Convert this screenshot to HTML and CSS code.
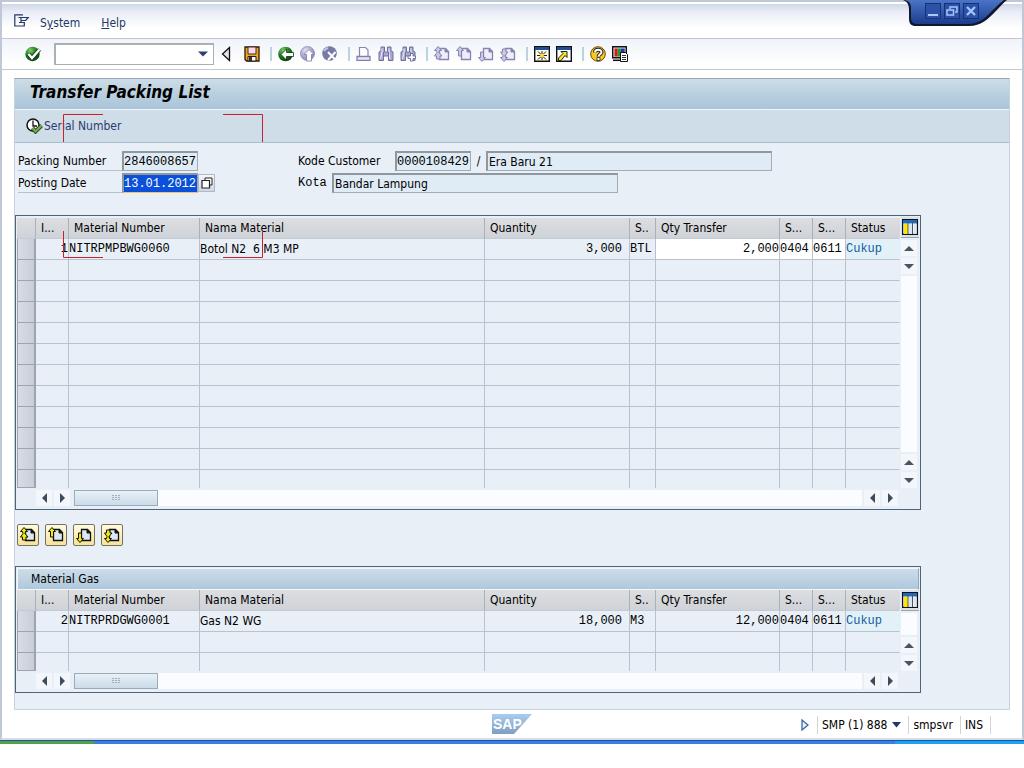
FILE: index.html
```html
<!DOCTYPE html>
<html lang="en">
<head>
<meta charset="utf-8">
<title>Transfer Packing List</title>
<link rel="stylesheet" href="styles.css">
</head>
<body>
<svg class="defs" aria-hidden="true">
  <defs>
    <radialGradient id="g-green" cx="35%" cy="25%" r="80%"><stop offset="0" stop-color="#7ccf6a"/><stop offset=".5" stop-color="#1f7a1f"/><stop offset="1" stop-color="#063c10"/></radialGradient>
    <radialGradient id="g-lilac" cx="35%" cy="25%" r="80%"><stop offset="0" stop-color="#dcdcf2"/><stop offset="1" stop-color="#8484b8"/></radialGradient>
    <linearGradient id="g-tab" x1="0" y1="0" x2="0" y2="1"><stop offset="0" stop-color="#4a74c8"/><stop offset="1" stop-color="#1c3c8c"/></linearGradient>
    <linearGradient id="g-sap" x1="0" y1="0" x2="0" y2="1"><stop offset="0" stop-color="#a8cdf0"/><stop offset="1" stop-color="#7f9fc0"/></linearGradient>
  </defs>
  <symbol id="page" viewBox="0 0 16 16"><path d="M5.500 2.500h6l3 3v8h-9z" stroke-width="1.300"/><path d="M11 2v4h3.500z" fill="currentColor" stroke-width="1"/></symbol>
  <symbol id="first" viewBox="0 0 16 16"><use href="#page"/><path class="arrow" d="M4 .5 7.500 4.500H5.500L5 6.500 8 10H6v3H2.500v-3H.5L3 6.500 2.500 4.500H.5z"/></symbol>
  <symbol id="prev" viewBox="0 0 16 16"><use href="#page"/><path class="arrow" d="M4 .5 7.500 4.500h-2V10h-3V4.500h-2z"/></symbol>
  <symbol id="next" viewBox="0 0 16 16"><use href="#page"/><path class="arrow" d="M4 15.500 7.500 11.500h-2V6h-3v5.500h-2z"/></symbol>
  <symbol id="last" viewBox="0 0 16 16"><use href="#page"/><path class="arrow" d="M4 15.500 7.500 11.500H5.500L5 9.500 8 6H6V3H2.500v3H.5L3 9.500l-.5 2H.5z"/></symbol>
  <symbol id="bino" viewBox="0 0 16 16"><path d="M3 1h3.500v5h3V1H13v4l2 1v8.500h-4.500V10h-5v4.500H1V6l2-1z" fill="#a9a9d0" stroke="#6f6f9c"/><path d="M4 2.500v4L2.500 13M11 2.500v4l.8 6.500" stroke="#ededff" fill="none"/><path d="M5.500 6v7M10.500 6v5" stroke="#73739f" fill="none"/></symbol>
  <symbol id="config" viewBox="0 0 16 16"><path d="M.5.500h15v15H.5z" fill="#fff" stroke="#111" stroke-width="1.500"/><path d="M1 1h14v3.500H1z" fill="#1e6cc0"/><path d="M2 5h4v10H2z" fill="#ffe600"/><path d="M6 2v13M10.500 2v13" stroke="#456" stroke-width="1"/><path d="M7 5h3v10H7zM11.500 5h3v10h-3z" fill="#dde6ee"/></symbol>
</svg>

<div class="window">
  <header class="menubar">
    <svg class="menu-icon" width="16" height="14" viewBox="0 0 16 14"><path d="M9 .8H.8V12h9.500V9M4.500 3.500h9.700l-2.500 3H7M7 4v4.500H5M7 8.500h4" fill="none" stroke="#233864" stroke-width="1.200"/></svg>
    <nav class="menus">
      <button class="menu" type="button">S<u>y</u>stem</button>
      <button class="menu" type="button"><u>H</u>elp</button>
    </nav>
    <div class="wincontrols">
      <svg class="wintab" width="104" height="30" viewBox="0 0 104 30"><path d="M0 0c5 2 6 5 6 10v8c0 6 2 8 7 8h53c12 0 19-7 25-13S101 2 104 0z" fill="#10182c"/><path d="M2 0c5 2 6 4 6 8v9c0 5 2 7 6 7h51c11 0 17-6 23-12S98 2 101 0z" fill="url(#g-tab)"/></svg>
      <div class="winbuttons">
        <button type="button" aria-label="Minimize"><svg width="14" height="14" viewBox="0 0 14 14"><path d="M2 11h10" stroke="#a9c6ff" stroke-width="2"/></svg></button>
        <button type="button" aria-label="Restore"><svg width="14" height="14" viewBox="0 0 14 14"><path d="M5 5V3h7v5h-2" fill="none" stroke="#a9c6ff" stroke-width="1.500"/><path d="M2 6h6.500v5H2z" fill="none" stroke="#a9c6ff" stroke-width="1.500"/></svg></button>
        <button type="button" aria-label="Close"><svg width="14" height="14" viewBox="0 0 14 14"><path d="m3 3 8 8M11 3l-8 8" stroke="#a9c6ff" stroke-width="2.200"/></svg></button>
      </div>
    </div>
  </header>

  <div class="toolbar">
    <button class="tool" type="button" aria-label="Enter"><svg viewBox="0 0 16 16"><circle cx="7.500" cy="8" r="7.200" fill="url(#g-green)"/><path d="m3.500 8 3.500 4 7.500-8.500" fill="none" stroke="#083010" stroke-width="4"/><path d="m3.500 8 3.500 4 7.500-8.500" fill="none" stroke="#fff" stroke-width="2.500"/></svg></button>
    <div class="command">
      <input type="text" aria-label="Command">
      <button type="button" aria-label="Command history"><svg width="10" height="6" viewBox="0 0 10 6"><path d="M0 .5h10L5 5.500z" fill="#2c3f70"/></svg></button>
    </div>
    <button class="tool tool-wide" type="button" aria-label="Hide command field"><svg viewBox="0 0 16 16"><path d="M9.500 1.500v13L2.500 8z" fill="#e4e4e4" stroke="#111" stroke-width="1.300"/></svg></button>
    <button class="tool" type="button" aria-label="Save"><svg viewBox="0 0 16 16"><path d="M1 1h14v14H2.500L1 13.500z" fill="#eda82a" stroke="#2b1a04" stroke-width="1.300"/><path d="M4 1h8v7H4z" fill="#f9d9e6" stroke="#4a2b20"/><path d="M4 10.500h8V15H4z" fill="#fff" stroke="#2b1a04"/><path d="M5 11h3v4H5z" fill="#35302c"/></svg></button>
    <span class="sep"></span>
    <button class="tool" type="button" aria-label="Back"><svg viewBox="0 0 16 16"><circle cx="7.500" cy="8" r="7.300" fill="url(#g-green)"/><path d="M3 8.500 8.500 3v3.500H15.500v4H8.500V14z" fill="#fff" stroke="#083010" stroke-width=".8"/></svg></button>
    <button class="tool" type="button" aria-label="Exit"><svg viewBox="0 0 16 16"><circle cx="7.500" cy="7.500" r="7" fill="url(#g-lilac)" stroke="#7c7cae" stroke-width=".7"/><path d="M9 3.500 14 8.500h-2.500V15h-5V8.500H4z" fill="#fff" stroke="#7777aa" stroke-width=".8"/></svg></button>
    <button class="tool" type="button" aria-label="Cancel"><svg viewBox="0 0 16 16"><circle cx="7.500" cy="7.500" r="7.300" fill="#7979a5"/><path d="M2 5a6 6 0 0 1 4-3" stroke="#c5c5e5" stroke-width="2" fill="none"/><path d="m6 6 7.500 8M13.500 6 6 14" stroke="#fff" stroke-width="2"/></svg></button>
    <span class="sep"></span>
    <button class="tool" type="button" aria-label="Print"><svg viewBox="0 0 16 16"><path d="M3.500 10V1.500h6L12 4v6" fill="#fff" stroke="#8787b4" stroke-width="1.200"/><path d="M1 10.500h13v3.800H1z" fill="#e8e8f8" stroke="#8080ae" stroke-width="1.300"/></svg></button>
    <button class="tool" type="button" aria-label="Find"><svg viewBox="0 0 16 16"><use href="#bino"/></svg></button>
    <button class="tool" type="button" aria-label="Find next"><svg viewBox="0 0 16 16"><use href="#bino"/><path d="M10.500 7.500h2.500V10h2.500v2.500H13V15h-2.500v-2.500H8V10h2.500z" fill="#fff" stroke="#73739f"/></svg></button>
    <span class="sep"></span>
    <button class="tool pale" type="button" aria-label="First page"><svg viewBox="0 0 16 16"><use href="#first"/></svg></button>
    <button class="tool pale" type="button" aria-label="Previous page"><svg viewBox="0 0 16 16"><use href="#prev"/></svg></button>
    <button class="tool pale" type="button" aria-label="Next page"><svg viewBox="0 0 16 16"><use href="#next"/></svg></button>
    <button class="tool pale" type="button" aria-label="Last page"><svg viewBox="0 0 16 16"><use href="#last"/></svg></button>
    <span class="sep"></span>
    <button class="tool" type="button" aria-label="New session"><svg viewBox="0 0 16 16"><path d="M.7.700h14.600v14.600H.7z" fill="#fffef0" stroke="#111" stroke-width="1.400"/><path d="M1 1h14v3H1z" fill="#1d4f96"/><path d="M8 5v3M8 10v4M3 9.500h3.500M9.500 9.500H13M4 5.500l3 3M12 5.500l-3 3M4 13.500l3-3M12 13.500l-3-3" stroke="#2c2600" stroke-width="1"/><path d="M6.500 8h3v3h-3z" fill="#ffe620"/></svg></button>
    <button class="tool" type="button" aria-label="Create shortcut"><svg viewBox="0 0 16 16"><path d="M.7.700h14.600v14.600H.7z" fill="#fff" stroke="#111" stroke-width="1.400"/><path d="M1 1h14v3H1z" fill="#1d4f96"/><path d="M5 5.500h6v6L9 9.500 5 14.500H2.500V12L7 7.500z" fill="#ffe620" stroke="#222"/></svg></button>
    <span class="sep"></span>
    <button class="tool" type="button" aria-label="Help"><svg viewBox="0 0 16 16"><circle cx="8" cy="8" r="7.300" fill="#fbc91c" stroke="#6b4a08"/><path d="M5 6.500C5 3 11.500 3 11.500 6.200 11.500 8 8.500 8.500 8.500 10.500" fill="none" stroke="#222" stroke-width="4"/><path d="M5 6.500C5 3 11.500 3 11.500 6.200 11.500 8 8.500 8.500 8.500 10.500" fill="none" stroke="#fff" stroke-width="2"/><path d="M7 11.500h3v3H7z" fill="#fff" stroke="#222" stroke-width=".8"/></svg></button>
    <button class="tool" type="button" aria-label="Customize layout"><svg viewBox="0 0 16 16"><path d="M.7.700h13.600v11H.7z" fill="#ddd" stroke="#111" stroke-width="1.400"/><path d="M2.500 2.500h3.200v8H2.500z" fill="#d91818"/><path d="M5.700 2.500h3v8h-3z" fill="#16a02c"/><path d="M8.700 2.500h4v8h-4z" fill="#2036b8"/><path d="M1 14.300h7" stroke="#111" stroke-width="1.500"/><path d="M8.500 6.500h5l2 2v7h-7z" fill="#fff" stroke="#111"/><path d="M10 9.500h4M10 11.500h4M10 13.500h4" stroke="#333"/></svg></button>
  </div>

  <main class="screen">
    <h1 class="title">Transfer Packing List</h1>
    <div class="appbar">
      <button class="serial" type="button"><svg width="17" height="16" viewBox="0 0 17 16"><circle cx="7" cy="7" r="6" fill="#fff" stroke="#111" stroke-width="1.500"/><path d="M7 2.500V8h4" fill="none" stroke="#111" stroke-width="1.300"/><path d="m6.500 10 3 3.500 6-6" fill="none" stroke="#23471a" stroke-width="4"/><path d="m6.500 10 3 3.500 6-6" fill="none" stroke="#7cab55" stroke-width="2.200"/></svg><span>Serial Number</span></button>
    </div>
    <svg class="marker" width="200" height="144" viewBox="0 0 200 144" aria-hidden="true"><path d="M40 .5H.5V28M160 .5h39.500V28M.5 117v26.500H40M199.500 117v26.500H160" fill="none" stroke="#c8202c"/></svg>

    <form class="content">
      <div class="fields">
        <div class="field">
          <label class="flabel" for="pack">Packing Number</label>
          <input class="box mono short" id="pack" value="2846008657" readonly>
        </div>
        <div class="field">
          <label class="rlabel" for="cust">Kode Customer</label>
          <input class="box mono short" id="cust" value="0000108429" readonly>
          <span class="slash">/</span>
          <input class="box long" aria-label="Customer name" value="Era Baru 21" readonly>
        </div>
        <div class="field">
          <label class="flabel" for="post">Posting Date</label>
          <span class="box mono short active"><input class="selected" id="post" value="13.01.2012"></span>
          <button class="f4" type="button" aria-label="Choose date"><svg width="12" height="12" viewBox="0 0 12 12"><path d="M4 3V1h7v7H9" fill="#fff" stroke="#222"/><path d="M1 3.500h7.500V11H1z" fill="#fff" stroke="#222" stroke-width="1.200"/></svg></button>
        </div>
        <div class="field">
          <label class="klabel mono" for="kota">Kota</label>
          <input class="box long" id="kota" value="Bandar Lampung" readonly>
        </div>
      </div>

      <section class="grid">
        <div class="gridtop">
          <table>
            <colgroup><col class="c-sel"><col class="c-i"><col class="c-mat"><col><col class="c-qty"><col class="c-u"><col class="c-tr"><col class="c-s"><col class="c-s"><col class="c-st"></colgroup>
            <thead><tr><th></th><th>I...</th><th>Material Number</th><th>Nama Material</th><th>Quantity</th><th>S..</th><th>Qty Transfer</th><th>S...</th><th>S...</th><th>Status</th></tr></thead>
            <tbody>
              <tr><td></td><td class="mono end">1</td><td class="mono">NITRPMPBWG0060</td><td class="pre">Botol N2  6 M3 MP</td><td class="mono num">3,000</td><td class="mono">BTL</td><td class="mono end edit">2,000</td><td class="mono edit">0404</td><td class="mono edit">0611</td><td class="mono status">Cukup</td></tr>
              <tr><td></td><td></td><td></td><td></td><td></td><td></td><td></td><td></td><td></td><td></td></tr>
              <tr><td></td><td></td><td></td><td></td><td></td><td></td><td></td><td></td><td></td><td></td></tr>
              <tr><td></td><td></td><td></td><td></td><td></td><td></td><td></td><td></td><td></td><td></td></tr>
              <tr><td></td><td></td><td></td><td></td><td></td><td></td><td></td><td></td><td></td><td></td></tr>
              <tr><td></td><td></td><td></td><td></td><td></td><td></td><td></td><td></td><td></td><td></td></tr>
              <tr><td></td><td></td><td></td><td></td><td></td><td></td><td></td><td></td><td></td><td></td></tr>
              <tr><td></td><td></td><td></td><td></td><td></td><td></td><td></td><td></td><td></td><td></td></tr>
              <tr><td></td><td></td><td></td><td></td><td></td><td></td><td></td><td></td><td></td><td></td></tr>
              <tr><td></td><td></td><td></td><td></td><td></td><td></td><td></td><td></td><td></td><td></td></tr>
              <tr><td></td><td></td><td></td><td></td><td></td><td></td><td></td><td></td><td></td><td></td></tr>
              <tr><td></td><td></td><td></td><td></td><td></td><td></td><td></td><td></td><td></td><td></td></tr>
            </tbody>
          </table>
          <div class="vscroll">
            <button class="config" type="button" aria-label="Table settings"><svg width="16" height="16"><use href="#config"/></svg></button>
            <button class="sb up" type="button" aria-label="Scroll up"></button>
            <button class="sb down" type="button" aria-label="Scroll down"></button>
            <span class="track"></span>
            <button class="sb up" type="button" aria-label="Page up"></button>
            <button class="sb down" type="button" aria-label="Page down"></button>
          </div>
        </div>
        <div class="hscroll">
          <button class="sb left" type="button" aria-label="Scroll left"></button>
          <button class="sb right" type="button" aria-label="Scroll right"></button>
          <span class="track"><span class="thumb"></span></span>
          <button class="sb left" type="button" aria-label="Page left"></button>
          <button class="sb right" type="button" aria-label="Page right"></button>
        </div>
      </section>

      <div class="pager">
        <button type="button" aria-label="First page"><svg width="16" height="16"><use href="#first"/></svg></button>
        <button type="button" aria-label="Previous page"><svg width="16" height="16"><use href="#prev"/></svg></button>
        <button type="button" aria-label="Next page"><svg width="16" height="16"><use href="#next"/></svg></button>
        <button type="button" aria-label="Last page"><svg width="16" height="16"><use href="#last"/></svg></button>
      </div>

      <section class="grid">
        <h2 class="caption">Material Gas</h2>
        <div class="gridtop">
          <table>
            <colgroup><col class="c-sel"><col class="c-i"><col class="c-mat"><col><col class="c-qty"><col class="c-u"><col class="c-tr"><col class="c-s"><col class="c-s"><col class="c-st"></colgroup>
            <thead><tr><th></th><th>I...</th><th>Material Number</th><th>Nama Material</th><th>Quantity</th><th>S..</th><th>Qty Transfer</th><th>S...</th><th>S...</th><th>Status</th></tr></thead>
            <tbody>
              <tr><td></td><td class="mono end">2</td><td class="mono">NITRPRDGWG0001</td><td>Gas N2 WG</td><td class="mono num">18,000</td><td class="mono">M3</td><td class="mono end">12,000</td><td class="mono">0404</td><td class="mono">0611</td><td class="mono status">Cukup</td></tr>
              <tr><td></td><td></td><td></td><td></td><td></td><td></td><td></td><td></td><td></td><td></td></tr>
              <tr><td></td><td></td><td></td><td></td><td></td><td></td><td></td><td></td><td></td><td></td></tr>
            </tbody>
          </table>
          <div class="vscroll">
            <button class="config" type="button" aria-label="Table settings"><svg width="16" height="16"><use href="#config"/></svg></button>
            <span class="track"></span>
            <button class="sb up" type="button" aria-label="Scroll up"></button>
            <button class="sb down" type="button" aria-label="Scroll down"></button>
          </div>
        </div>
        <div class="hscroll">
          <button class="sb left" type="button" aria-label="Scroll left"></button>
          <button class="sb right" type="button" aria-label="Scroll right"></button>
          <span class="track"><span class="thumb"></span></span>
          <button class="sb left" type="button" aria-label="Page left"></button>
          <button class="sb right" type="button" aria-label="Page right"></button>
        </div>
      </section>
    </form>
  </main>

  <footer class="statusbar">
    <svg class="logo" width="40" height="20" viewBox="0 0 40 20" role="img" aria-label="SAP"><path d="M0 0h40L22 20H0z" fill="url(#g-sap)"/><text x="1" y="15" class="logotext">SAP</text></svg>
    <div class="info">
      <button class="expand" type="button" aria-label="Expand"><svg width="8" height="12" viewBox="0 0 8 12"><path d="M1 1v10l6-5z" fill="#e8f2fc" stroke="#3d6a9e" stroke-width="1.300"/></svg></button>
      <button class="cell" type="button">SMP (1) 888 <svg width="9" height="6" viewBox="0 0 9 6"><path d="M0 0h9L4.500 5.500z" fill="#22366c"/></svg></button>
      <span class="cell">smpsvr</span>
      <span class="cell last">INS</span>
    </div>
  </footer>
</div>
<div class="taskbar"><span class="start"></span><span class="tasks"></span><span class="tray"></span></div>
</body>
</html>
```
FILE: styles.css
```css
* { box-sizing: border-box; }
body { margin: 0; background: #fff; color: #000; font: 12px/16px "DejaVu Sans Condensed", "DejaVu Sans", sans-serif; }
button { margin: 0; padding: 0; border: 0; background: none; color: inherit; font: inherit; }
input { margin: 0; padding: 0; border: 0; background: none; color: inherit; font: inherit; min-width: 0; }
input:focus { outline: none; }
svg { display: block; }
.defs { position: absolute; width: 0; height: 0; }
.mono { font-family: "Liberation Mono", monospace; }

.window { position: relative; border: 2px solid #c0c7d6; border-bottom-color: #d8dce8; background: #fff; }

.menubar { display: flex; align-items: center; height: 37px; padding: 6px 12px 0; border-bottom: 1px solid #c4c8cc; background: linear-gradient(#fff 0, #fff 2px, #ced8e6 2px, #eaedf7 10px, #fff 26px); color: #233864; }
.menus { display: flex; gap: 21px; margin-left: 10px; }
.menu-icon { margin-bottom: 4px; }
.wincontrols { position: absolute; top: -2px; right: 15px; }
.winbuttons { position: absolute; top: 3px; left: 22px; display: flex; gap: 3px; }
.winbuttons button { width: 16px; height: 16px; border: 1px solid #16307a; background: #2c52a8; }

.toolbar { display: flex; align-items: center; gap: 6px; height: 31px; padding: 0 23px 1px; border-bottom: 1px solid #c4c8cc; background: linear-gradient(#eff3f9, #fff 24px); }
.tool { width: 16px; height: 16px; flex: none; }
.tool svg { width: 16px; height: 16px; }
.tool-wide { width: 18px; }
.pale { --arrow: #c9c9e6; color: #8585b0; fill: #eeeefa; stroke: #8585b0; }
.arrow { fill: var(--arrow); }
.sep { width: 6px; height: 14px; border-right: 2px solid #b9d3df; flex: none; }
.command { display: flex; align-items: center; width: 160px; height: 22px; margin-left: 7px; border: 1px solid #aab0b4; border-width: 2px 1px 1px 2px; background: #fff; }
.command input { flex: 1; padding-left: 3px; }
.command button { width: 20px; display: flex; justify-content: center; }

.screen { position: relative; margin: 8px 12px 0; border: 1px solid #c6d3de; border-top-color: #97a9bd; background: #e8eff7; }
.title { height: 30px; margin: 0; padding: 2px 15px; background: linear-gradient(#cddde7, #b6cddd 60%, #a9c4da); font-size: 17px; line-height: 22px; font-style: italic; font-weight: bold; }
.appbar { display: flex; align-items: center; height: 34px; padding-left: 11px; border-top: 1px solid #f2f7fa; border-bottom: 1px solid #a8bccb; background: #cedde7; color: #2b3c70; }
.serial { display: flex; align-items: center; gap: 1px; }
.marker { position: absolute; left: 48px; top: 35px; z-index: 2; pointer-events: none; }

.content { padding: 8px 0 16px; }
.fields { display: grid; grid-template-columns: 280px 1fr; row-gap: 2px; padding: 0 3px; margin-bottom: 22px; }
.field { display: flex; align-items: center; height: 20px; min-width: 0; }
.flabel { width: 104px; height: 20px; line-height: 20px; border-bottom: 1px solid #b9c2ca; }
.rlabel { width: 97px; }
.klabel { width: 34px; }
.slash { width: 15px; text-align: center; }
.box { height: 20px; padding: 0 1px; border: 1px solid #a3abb3; border-width: 2px 1px 1px 2px; border-color: #8f979f #a3abb3 #a3abb3 #8f979f; background: #dfebf5; }
.short { width: 76px; padding: 0; flex: none; }
.long { width: 286px; }
.active { display: flex; border-bottom-color: #eac37c; background: #fff; }
.selected { width: 100%; background: #0a50d8; color: #fff; }
.f4 { display: flex; align-items: center; justify-content: center; width: 17px; height: 18px; border: 1px solid #aeb9c8; background: linear-gradient(#f2f5f9, #cfd8e4); }

.grid { max-width: 906px; border: 1px solid #4f6478; padding: 1px; }
.caption { height: 22px; margin: 0; padding: 0 13px; border: 1px solid #f0f6fa; border-right-color: #8fa9bf; background: linear-gradient(#cddde9, #afc8dc); font-size: 12px; font-weight: normal; line-height: 20px; }
.gridtop { display: flex; }
table { flex: 1; width: 0; table-layout: fixed; border-collapse: separate; border-spacing: 0; margin-top: 1px; }
.caption + .gridtop table { margin-top: 0; }
.c-sel { width: 19px; } .c-i { width: 33px; } .c-mat { width: 131px; } .c-qty { width: 145px; } .c-u { width: 26px; }
.c-tr { width: 124px; } .c-s { width: 33px; } .c-st { width: 54px; }
th { height: 21px; padding: 0 5px; border-right: 1px solid #a9b1ba; border-bottom: 1px solid #c3cad1; background: linear-gradient(#dcdee0, #cfd2d8); text-align: left; font-weight: normal; line-height: 20px; white-space: nowrap; overflow: hidden; }
th:last-child, td:last-child { border-right-color: transparent; }
td { height: 21px; padding: 0; border-right: 1px solid #b9c2cd; border-bottom: 1px solid #b9c2cd; line-height: 20px; white-space: nowrap; overflow: hidden; }
tbody tr:last-child td { height: 18px; border-bottom: 0; }
td:first-child, tbody tr:last-child td:first-child { border: 1px solid #9da4b0; border-width: 0 2px 1px 1px; background: linear-gradient(90deg, #d8dce4, #c8cdd7); }
.end { text-align: right; }
.num { text-align: right; padding-right: 7px; }
.pre { white-space: pre; }
.edit { background: #fff; }
.status { background: #e2f0f8; color: #12609c; }

.vscroll { display: flex; flex-direction: column; width: 19px; padding-left: 1px; flex: none; }
.config { display: flex; align-items: center; justify-content: center; height: 21px; width: 18px; margin-bottom: 2px; border-bottom: 1px solid #9aa3ad; background: #dcdfe3; }
.vscroll .track { flex: 1; width: 16px; margin-bottom: 2px; background: #fafcff; }
.sb { width: 16px; height: 16px; margin-bottom: 2px; background: #f3f7fb; display: flex; align-items: center; justify-content: center; flex: none; }
.vscroll .sb:last-child { margin-bottom: 0; }
.sb::before { content: ""; border: 5px solid transparent; }
.up::before { border-bottom-color: #49565f; border-top: 0; }
.down::before { border-top-color: #49565f; border-bottom: 0; }
.left::before { border-right-color: #3c4c5c; border-left: 0; }
.right::before { border-left-color: #3c4c5c; border-right: 0; }
.hscroll { display: flex; gap: 2px; margin: 2px 21px 2px 19px; }
.hscroll .sb { margin: 0; }
.hscroll .track { flex: 1; display: flex; background: #fafcff; margin-left: 2px; }
.thumb { display: flex; align-items: center; justify-content: center; width: 84px; height: 16px; border: 1px solid #9aabb9; background: linear-gradient(#e9f1f7, #cbdbe8); }
.thumb::before { content: ""; width: 9px; height: 6px; background: repeating-linear-gradient(90deg, #9fb0c0 0 2px, transparent 2px 3px); mask: repeating-linear-gradient(#000 0 1px, transparent 1px 2px); }

.pager { --arrow: #f5e800; display: flex; gap: 6px; margin: 14px 2px 20px; }
.pager button { display: flex; align-items: center; justify-content: center; width: 22px; height: 22px; border: 1px solid #77705c; border-radius: 2px; background: linear-gradient(#fffbe4, #f5e29a); color: #222; fill: #dce9f5; stroke: #111; }

.statusbar { display: grid; grid-template-columns: 1fr auto 1fr; align-items: center; height: 28px; padding: 0 31px; }
.logo { grid-column: 2; }
.logotext { fill: #fff; font: bold 14px "Liberation Sans", sans-serif; }
.info { grid-column: 3; display: flex; align-items: center; justify-content: flex-end; line-height: 18px; padding-top: 2px; }
.expand { margin-right: 8px; }
.cell { display: flex; align-items: center; gap: 5px; padding: 0 7px 0 4px; border-left: 1px solid #d4d4d4; white-space: nowrap; }
.last { border-right: 1px solid #d4d4d4; }

.taskbar { display: flex; height: 4px; border-top: 1px solid #1d50a8; }
.start { width: 94px; background: #4fa344; }
.tasks { flex: 1; background: #3a80e0; }
.tray { width: 129px; background: #1ba3ec; }
```
